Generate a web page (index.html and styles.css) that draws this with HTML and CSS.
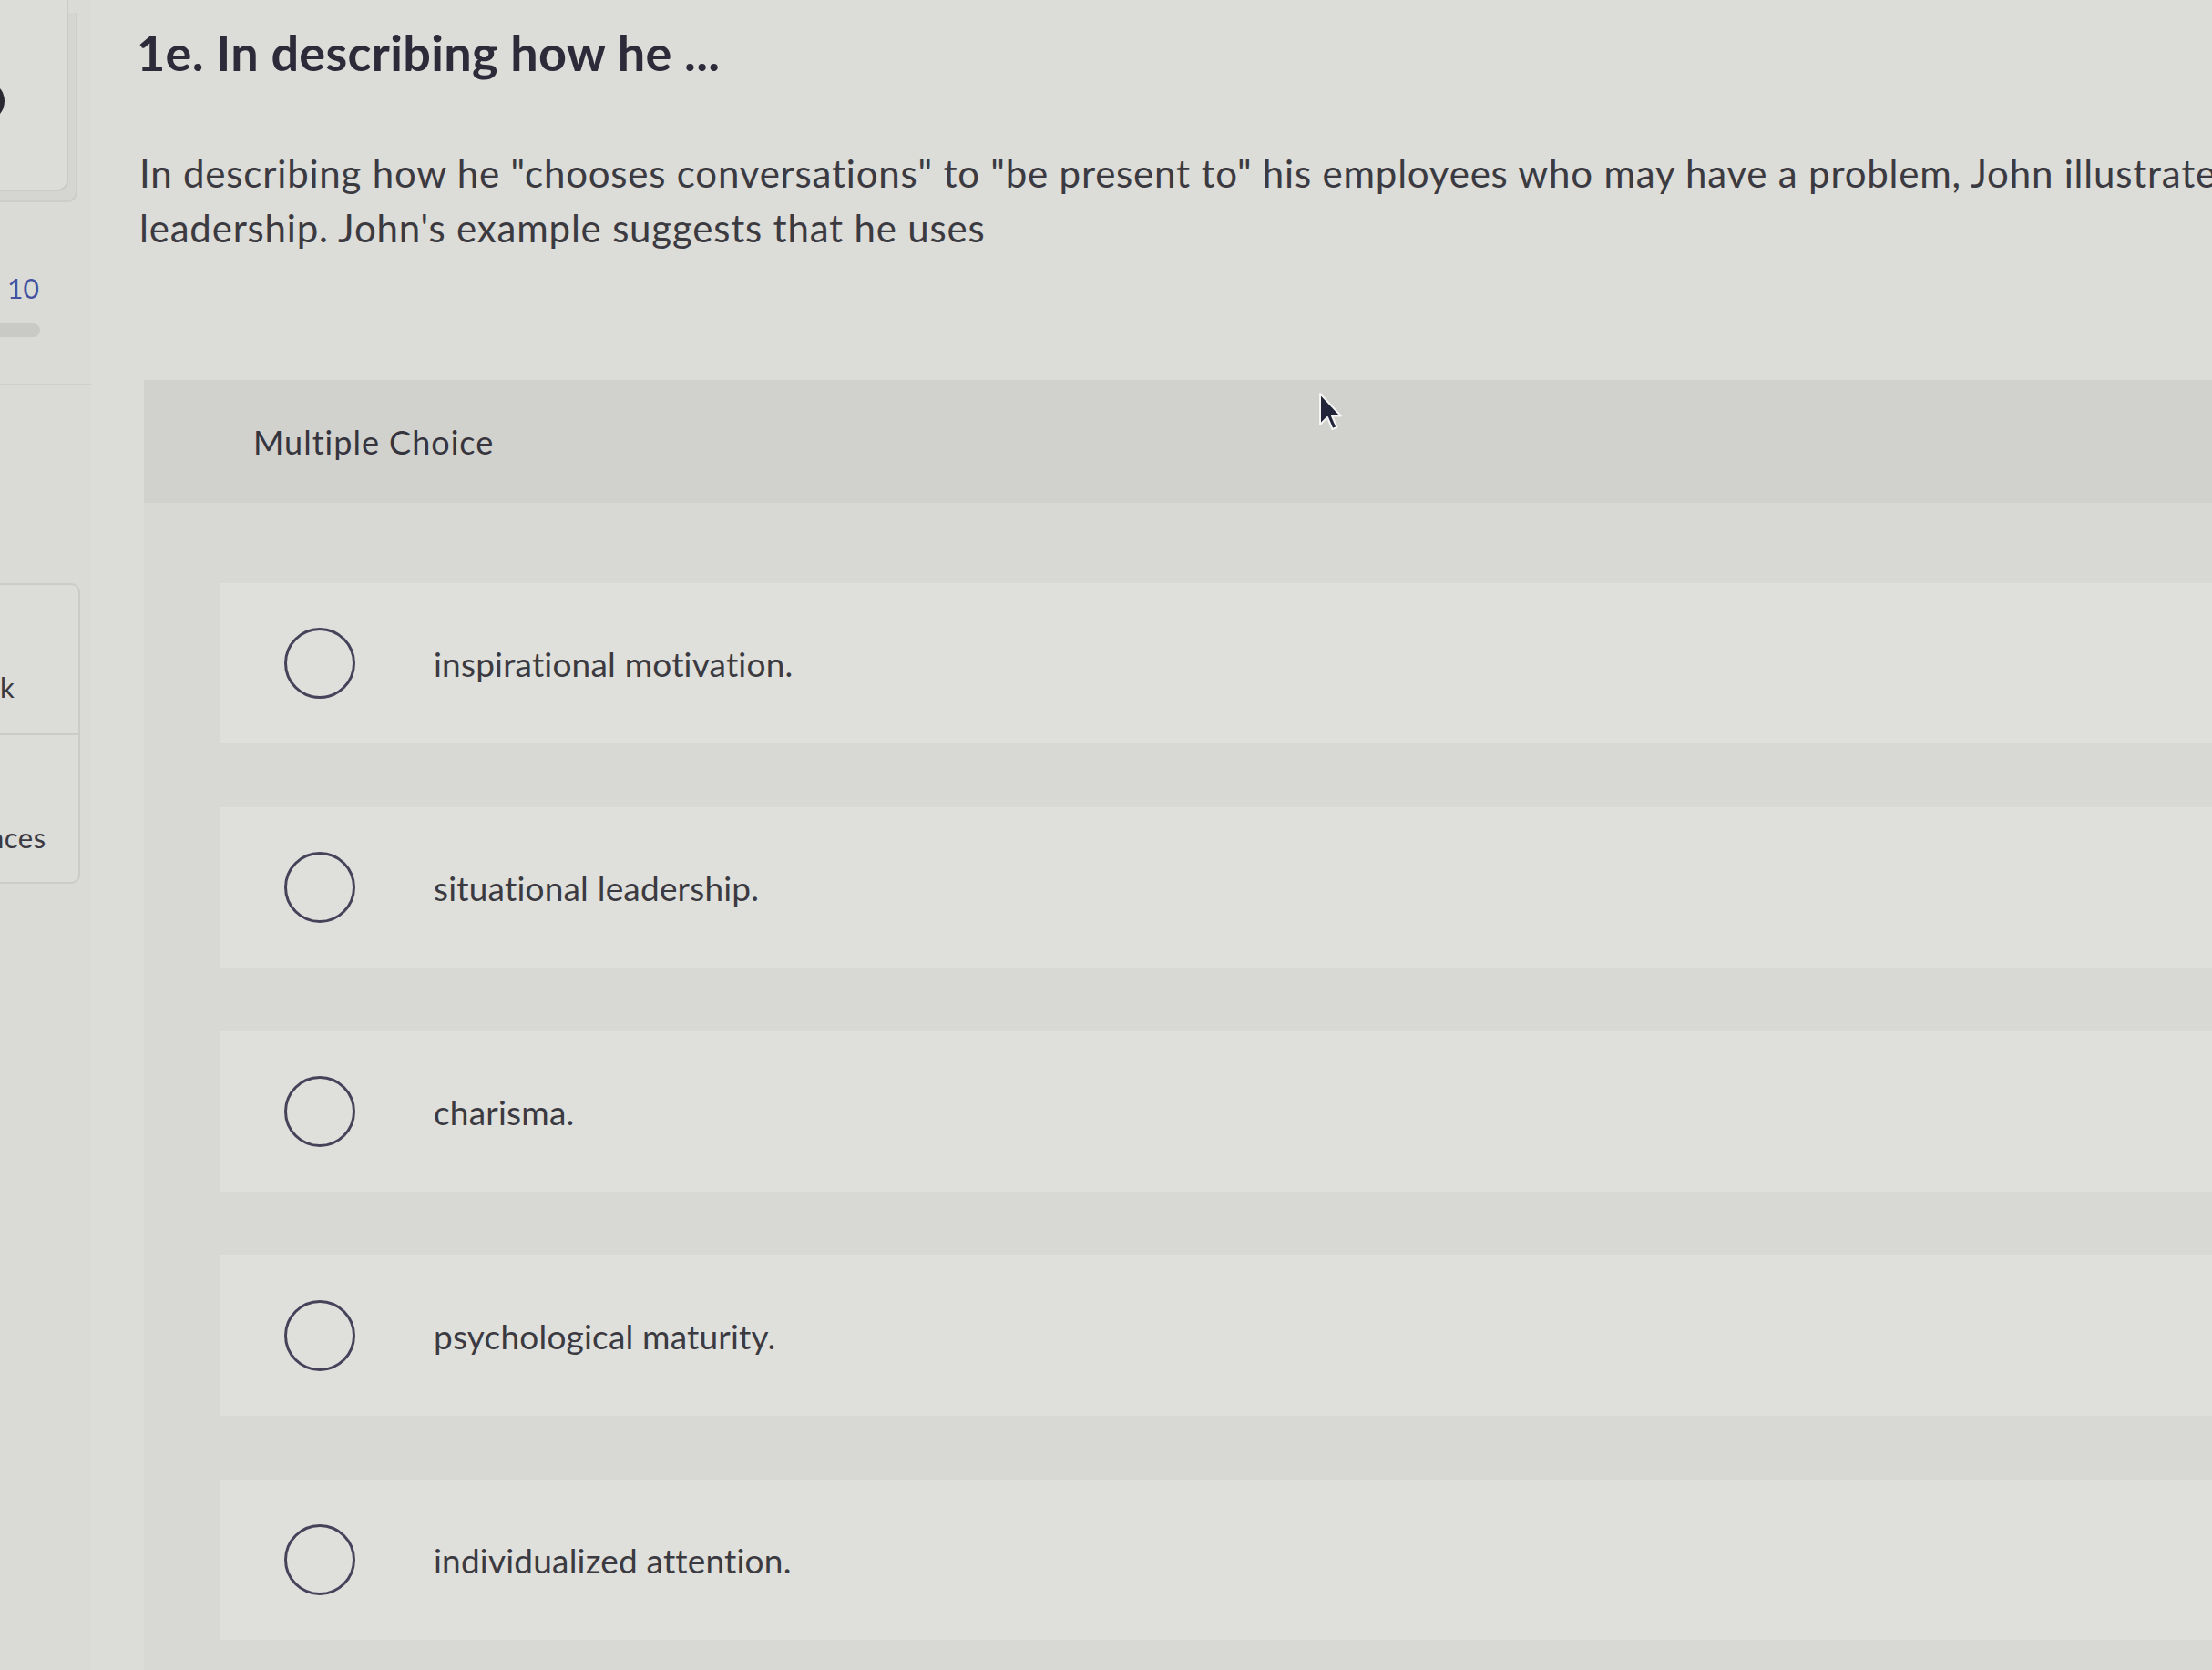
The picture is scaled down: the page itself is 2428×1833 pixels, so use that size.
FILE: index.html
```html
<!DOCTYPE html>
<html lang="en">
<head>
<meta charset="utf-8">
<title>1e. In describing how he ...</title>
<link rel="stylesheet" href="styles.css">
</head>
<body>
<div class="page">
  <aside class="sidebar">
    <div class="side-card top-card"><span class="avatar"></span></div>
    <div class="side-count">10</div>
    <div class="side-pill"></div>
    <div class="side-rule"></div>
    <div class="side-card links">
      <div class="side-link"><span>k</span></div>
      <div class="side-link"><span class="clip">nces</span></div>
    </div>
  </aside>
  <main class="main">
    <h1 class="title">1e. In describing how he ...</h1>
    <p class="question">In describing how he "chooses conversations" to "be present to" his employees who may have a problem, John illustrated his use of situational<br>leadership. John's example suggests that he uses</p>
    <section class="mc">
      <div class="mc-head">Multiple Choice</div>
      <ul class="choices">
        <li class="choice"><span class="radio"></span><span class="label">inspirational motivation.</span></li>
        <li class="choice"><span class="radio"></span><span class="label">situational leadership.</span></li>
        <li class="choice"><span class="radio"></span><span class="label">charisma.</span></li>
        <li class="choice"><span class="radio"></span><span class="label">psychological maturity.</span></li>
        <li class="choice"><span class="radio"></span><span class="label">individualized attention.</span></li>
      </ul>
    </section>
  </main>
</div>
<svg class="cursor" width="26" height="44" viewBox="0 0 26 44" aria-hidden="true">
  <path d="M2 2 L2 36 L10 28 L15.5 41 L20.5 39 L15 26.5 L25 26.5 Z" fill="#22253a" stroke="#f4f4f2" stroke-width="2" stroke-linejoin="round"/>
</svg>
</body>
</html>
```

FILE: styles.css
```css
html, body {
  margin: 0;
  padding: 0;
}

body {
  width: 2428px;
  height: 1833px;
  overflow: hidden;
  position: relative;
  background: #dcdcd8;
  font-family: Lato, "Open Sans", "Liberation Sans", sans-serif;
  color: #3b3a41;
}

.page {
  display: flex;
  height: 1833px;
  overflow: hidden;
}

/* ---------- sidebar ---------- */
.sidebar {
  width: 100px;
  flex: none;
  display: flex;
  flex-direction: column;
  background: #dadad6;
}

.side-card {
  margin-left: -20px;
  border: 2px solid #cbcbc7;
  border-left: none;
  background: #dcdcd8;
}

.top-card {
  height: 208px;
  width: 93px;
  border-top: none;
  border-radius: 0 0 12px 0;
  display: flex;
  align-items: center;
  box-shadow: 10px 12px 0 -2px #d5d5d1, 11px 13px 0 -1px #cdcdc9;
}

.avatar {
  width: 44px;
  height: 44px;
  margin-left: -19px;
  margin-top: 14px;
  border-radius: 50%;
  background: #2a2830;
  flex: none;
}

.side-count {
  margin-top: 91px;
  padding-left: 8px;
  font-size: 30px;
  line-height: 30px;
  color: #4352a0;
}

.side-pill {
  margin-top: 24px;
  width: 44px;
  height: 15px;
  border-radius: 0 8px 8px 0;
  background: #c9c9c5;
}

.side-rule {
  margin-top: 51px;
  width: 100px;
  height: 2px;
  background: #cfcfcb;
}

.links {
  margin-top: 217px;
  width: 106px;
  border-radius: 0 10px 10px 0;
}

.side-link {
  height: 163px;
  box-sizing: border-box;
  padding-top: 95px;
  padding-left: 20px;
  font-size: 31px;
  line-height: 34px;
  letter-spacing: 0.5px;
  color: #3a3940;
}

.side-link + .side-link {
  border-top: 2px solid #cbcbc7;
}

.side-link .clip {
  margin-left: -13px;
}

/* ---------- main ---------- */
.main {
  flex: 1;
  min-width: 0;
  padding-left: 50px;
}

.title {
  margin: 0;
  padding-top: 26px;
  font-size: 54px;
  line-height: 64px;
  font-weight: 700;
  color: #2d2b3a;
  letter-spacing: 0.3px;
}

.question {
  margin: 70px 0 0 3px;
  font-size: 42px;
  line-height: 60px;
  letter-spacing: 0.8px;
  white-space: nowrap;
  color: #3b3a41;
}

.mc {
  margin-top: 137px;
  margin-left: 8px;
  background: #d8d8d4;
  min-height: 1500px;
}

.mc-head {
  height: 135px;
  display: flex;
  align-items: center;
  padding-left: 120px;
  background: #d1d1cd;
  font-size: 36px;
  letter-spacing: 1px;
  color: #36353e;
}

.choices {
  list-style: none;
  margin: 88px 0 0;
  padding: 0 0 0 84px;
  display: flex;
  flex-direction: column;
  gap: 70px;
}

.choice {
  height: 176px;
  display: flex;
  align-items: center;
  padding-left: 70px;
  background: #dfdfdb;
}

.radio {
  width: 72px;
  height: 72px;
  flex: none;
  border: 3px solid #44435a;
  border-radius: 50%;
}

.label {
  margin-left: 86px;
  font-size: 37px;
  letter-spacing: 0.2px;
  color: #3b3a41;
}

/* mouse pointer over the page */
.cursor {
  position: absolute;
  left: 1447px;
  top: 430px;
}
```
